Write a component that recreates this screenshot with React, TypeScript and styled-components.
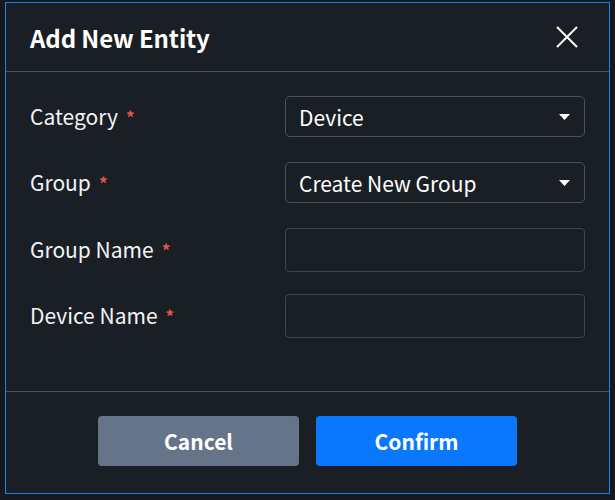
import { FC } from "react";
import styled, { createGlobalStyle } from "styled-components";

const GlobalStyle = createGlobalStyle`
	html, body {
		margin:0;
		padding:0;
		background:#15181d;
		font-family:"Noto Sans CJK SC", "Noto Sans", sans-serif;
	}
	* { box-sizing:border-box; }
`;

const Dialog = styled.div`
	margin:2px 5px 0 5px;
	width:605px;
	height:492px;
	background:#1a1e25;
	border:1px solid #1d7ff0;
	display:flex;
	flex-direction:column;
`;

const Header = styled.div`
	height:69px;
	display:flex;
	align-items:center;
	justify-content:space-between;
	padding:0 30px 0 24px;
	border-bottom:1px solid #4b5565;
`;

const Title = styled.h2`
	margin:0;
	color:#fff;
	font-size:24px;
	font-weight:700;
	letter-spacing:-0.1px;
`;

const CloseButton = styled.button`
	all:unset;
	width:24px;
	height:24px;
	display:flex;
	align-items:center;
	justify-content:center;
	cursor:pointer;
`;

const Body = styled.div`
	padding:24px 24px 0 24px;
	height:320px;
	border-bottom:1px solid #4b5565;
	display:flex;
	flex-direction:column;
	gap:25px;
`;

const Row = styled.div`
	display:grid;
	grid-template-columns:255px 300px;
	align-items:center;
	height:41px;
`;

const Label = styled.label`
	color:#f2f4f7;
	font-size:21px;
	font-weight:400;
	padding-bottom:2px;
`;

const Required = styled.span`
	color:#e5534b;
	font-size:17px;
	font-weight:700;
	margin-left:8px;
	position:relative;
	top:-1px;
`;

const Field = styled.div`
	height:41px;
	border:1px solid #4a5262;
	border-radius:5px;
	display:flex;
	align-items:center;
	justify-content:space-between;
	padding:0 14px 0 13px;
	color:#fff;
	font-size:21px;
	font-weight:400;
`;

const TextInput = styled.input`
	all:unset;
	height:42px;
	border:1px solid #40464f;
	border-radius:4px;
	padding:0 13px;
	color:#fff;
	font-size:21px;
	font-family:inherit;
`;

const Footer = styled.div`
	flex:1;
	display:flex;
	justify-content:center;
	gap:17px;
	padding-top:24px;
`;

const Button = styled.button<{ $primary?:boolean }>`
	all:unset;
	width:201px;
	height:50px;
	border-radius:4px;
	background:${p => p.$primary ? "#0a78fe" : "#657489"};
	color:#fff;
	font-size:21px;
	font-weight:700;
	display:flex;
	align-items:center;
	justify-content:center;
	cursor:pointer;
`;

const Caret = () => (
	<svg width="11" height="6" viewBox="0 0 11 6">
		<path d="M0 0 L11 0 L5.5 6 Z" fill="#fff"/>
	</svg>
);

const Select:FC<{ value:string }> = (props) => (
	<Field>
		<span>{ props.value }</span>
		<Caret/>
	</Field>
);

const FormRow:FC<{ label:string; children:React.ReactNode }> = (props) => (
	<Row>
		<Label>{ props.label }<Required>*</Required></Label>
		{ props.children }
	</Row>
);

export default function App() {
	return (
		<>
			<GlobalStyle/>
			<Dialog>
				<Header>
					<Title>Add New Entity</Title>
					<CloseButton aria-label="close">
						<svg width="24" height="24" viewBox="0 0 24 24">
							<path d="M2 2 L22 22 M22 2 L2 22" stroke="#fff" strokeWidth="2"/>
						</svg>
					</CloseButton>
				</Header>
				<Body>
					<FormRow label="Category">
						<Select value="Device"/>
					</FormRow>
					<FormRow label="Group">
						<Select value="Create New Group"/>
					</FormRow>
					<FormRow label="Group Name">
						<TextInput/>
					</FormRow>
					<FormRow label="Device Name">
						<TextInput/>
					</FormRow>
				</Body>
				<Footer>
					<Button>Cancel</Button>
					<Button $primary>Confirm</Button>
				</Footer>
			</Dialog>
		</>
	);
}
